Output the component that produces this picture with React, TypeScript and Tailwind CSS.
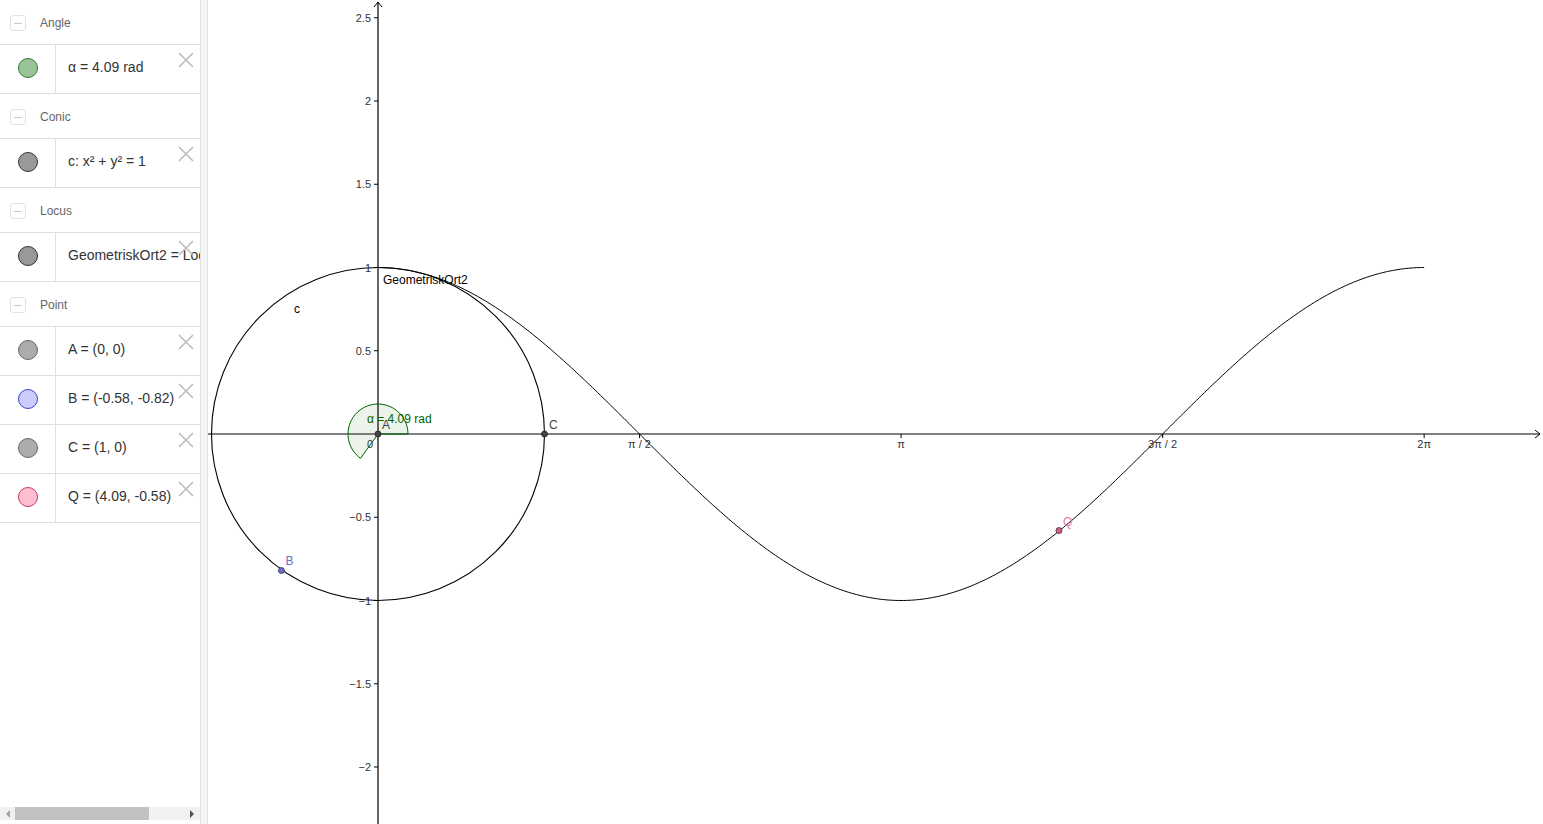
import React from "react";

const U = 166.5; // px per unit
const OX = 170; // origin x inside the graph svg
const OY = 434;

const px = (x: number) => OX + x * U;
const py = (y: number) => OY - y * U;

type Item = { text: string; fill: string; stroke: string };
type Group = { title: string; items: Item[] };

const groups: Group[] = [
  { title: "Angle", items: [{ text: "α = 4.09 rad", fill: "#99c499", stroke: "#2f7a2f" }] },
  { title: "Conic", items: [{ text: "c: x² + y² = 1", fill: "#999999", stroke: "#333333" }] },
  { title: "Locus", items: [{ text: "GeometriskOrt2 = Locus(Q, B)", fill: "#999999", stroke: "#333333" }] },
  {
    title: "Point",
    items: [
      { text: "A = (0, 0)", fill: "#acacac", stroke: "#666666" },
      { text: "B = (-0.58, -0.82)", fill: "#ccccff", stroke: "#4040cc" },
      { text: "C = (1, 0)", fill: "#acacac", stroke: "#666666" },
      { text: "Q = (4.09, -0.58)", fill: "#ffbfd1", stroke: "#cc3366" },
    ],
  },
];

function CloseIcon() {
  return (
    <svg width="16" height="16" viewBox="0 0 16 16" className="absolute right-[6px] top-[7px]">
      <path d="M1 1 L15 15 M15 1 L1 15" stroke="#bdbdbd" strokeWidth="1.6" fill="none" />
    </svg>
  );
}

function AlgebraPanel() {
  return (
    <div className="relative flex h-full w-[200px] shrink-0 flex-col overflow-hidden bg-white font-['Liberation_Sans',sans-serif]">
      <div className="flex-1">
        {groups.map((g) => (
          <div key={g.title}>
            <div className="flex h-[45px] items-center border-b border-[#e0e0e0] pt-[2px]">
              <div className="ml-[10px] flex h-[16px] w-[16px] items-center justify-center rounded-[3px] border border-[#e3e3e3]">
                <div className="h-[1px] w-[8px] bg-[#c8c8c8]" />
              </div>
              <span className="ml-[14px] text-[12px] text-[#666]">{g.title}</span>
            </div>
            {g.items.map((it) => (
              <div key={it.text} className="relative flex h-[49px] border-b border-[#e0e0e0]">
                <div className="flex w-[56px] shrink-0 items-center justify-center border-r border-[#e0e0e0] pb-[3px]">
                  <div
                    className="h-[20px] w-[20px] rounded-full border"
                    style={{ background: it.fill, borderColor: it.stroke }}
                  />
                </div>
                <div className="flex items-center whitespace-nowrap pb-[3px] pl-[12px] text-[14px] text-[#333]">
                  {it.text}
                </div>
                <CloseIcon />
              </div>
            ))}
          </div>
        ))}
      </div>
      <div className="mb-[4px] flex h-[13px] items-center bg-[#f1f1f1]">
        <svg width="6" height="8" viewBox="0 0 6 8" className="ml-[5px]">
          <path d="M5 0 L1 4 L5 8 Z" fill="#a3a3a3" />
        </svg>
        <div className="ml-[4px] h-[13px] w-[134px] bg-[#c1c1c1]" />
        <div className="flex-1" />
        <svg width="6" height="8" viewBox="0 0 6 8" className="mr-[5px]">
          <path d="M1 0 L5 4 L1 8 Z" fill="#505050" />
        </svg>
      </div>
    </div>
  );
}

function Graph() {
  const pts: string[] = [];
  for (let i = 0; i <= 400; i++) {
    const x = (i / 400) * 2 * Math.PI;
    pts.push(`${i === 0 ? "M" : "L"}${px(x).toFixed(2)} ${py(Math.cos(x)).toFixed(2)}`);
  }
  const yTicks = [2.5, 2, 1.5, 1, 0.5, -0.5, -1, -1.5, -2];
  const xTicks = [
    { v: Math.PI / 2, l: "π / 2" },
    { v: Math.PI, l: "π" },
    { v: (3 * Math.PI) / 2, l: "3π / 2" },
    { v: 2 * Math.PI, l: "2π" },
  ];
  const r = 30;
  const a = 4.09;
  const ex = OX + r * Math.cos(a);
  const ey = OY - r * Math.sin(a);
  const fmt = (v: number) => (v < 0 ? "\u2212" + String(-v) : String(v));
  const B = { x: px(-0.58), y: py(-0.82) };
  const Q = { x: px(4.09), y: py(-0.58) };
  return (
    <div className="relative h-full flex-1 overflow-hidden bg-white">
      <svg width="1335" height="824" className="block font-['Liberation_Sans',sans-serif]">
        {/* axes */}
        <line x1="0" y1={OY} x2="1332" y2={OY} stroke="#000" strokeWidth="1.2" />
        <path d={`M1327 ${OY - 4} L1332 ${OY} L1327 ${OY + 4}`} stroke="#000" fill="none" strokeWidth="1" />
        <line x1={OX} y1="2" x2={OX} y2="824" stroke="#000" strokeWidth="1.2" />
        <path d={`M${OX - 4} 7 L${OX} 2 L${OX + 4} 7`} stroke="#000" fill="none" strokeWidth="1" />
        {yTicks.map((t) => (
          <g key={t}>
            <line x1={OX - 4} y1={py(t)} x2={OX} y2={py(t)} stroke="#000" strokeWidth="1" />
            <text x={OX - 7} y={py(t) + 4} fontSize="11" textAnchor="end" fill="#333">
              {fmt(t)}
            </text>
          </g>
        ))}
        {xTicks.map((t) => (
          <g key={t.l}>
            <line x1={px(t.v)} y1={OY} x2={px(t.v)} y2={OY + 4} stroke="#000" strokeWidth="1" />
            <text x={px(t.v)} y={OY + 14} fontSize="11" textAnchor="middle" fill="#333">
              {t.l}
            </text>
          </g>
        ))}
        <text x={OX - 11} y={OY + 14} fontSize="11" fill="#333">0</text>

        {/* angle */}
        <path
          d={`M${OX} ${OY} L${OX + r} ${OY} A${r} ${r} 0 1 0 ${ex} ${ey} Z`}
          fill="#006400"
          fillOpacity="0.08"
          stroke="#006400"
          strokeWidth="1"
        />

        {/* circle c */}
        <circle cx={OX} cy={OY} r={U} fill="none" stroke="#000" strokeWidth="1.1" />
        {/* locus */}
        <path d={pts.join(" ")} fill="none" stroke="#000" strokeWidth="1" />

        {/* labels */}
        <text x="86" y="313" fontSize="12" fill="#000">c</text>
        <text x="175" y="284" fontSize="12" fill="#000">GeometriskOrt2</text>
        <text x="159" y="423" fontSize="12" fill="#006400">α = 4.09 rad</text>
        <text x="174" y="429" fontSize="12" fill="#444">A</text>
        <text x="341" y="429" fontSize="12" fill="#444">C</text>
        <text x={B.x + 4} y={B.y - 6} fontSize="12" fill="#6c6ccc">B</text>
        <text x={Q.x + 4} y={Q.y - 5} fontSize="12" fill="#e07aa0">Q</text>

        {/* points */}
        <circle cx={OX} cy={OY} r="3" fill="#444" stroke="#222" strokeWidth="0.8" />
        <circle cx={px(1)} cy={OY} r="3" fill="#444" stroke="#222" strokeWidth="0.8" />
        <circle cx={B.x} cy={B.y} r="3" fill="#6b6bd6" stroke="#333" strokeWidth="0.8" />
        <circle cx={Q.x} cy={Q.y} r="3" fill="#d65c86" stroke="#333" strokeWidth="0.8" />
      </svg>
    </div>
  );
}

export default function App() {
  return (
    <div className="flex h-[824px] w-[1543px] overflow-hidden bg-white">
      <AlgebraPanel />
      <div className="h-full w-[8px] shrink-0 border-x border-[#e2e2e2] bg-[#f5f5f5]" />
      <Graph />
    </div>
  );
}
